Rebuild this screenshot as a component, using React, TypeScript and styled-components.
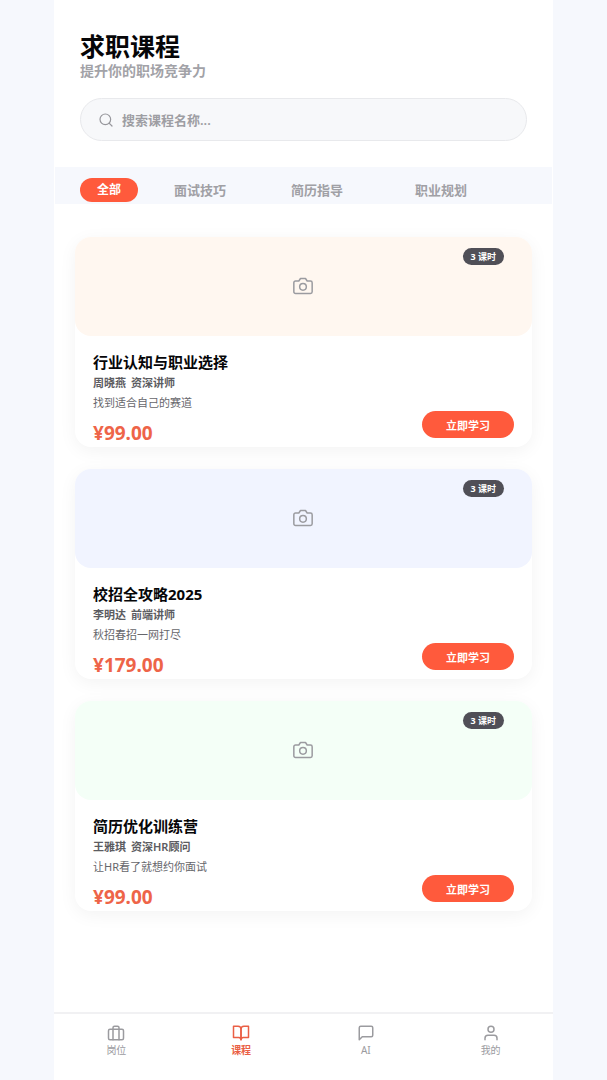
import { useState } from "react";
import type { IconType } from "react-icons";
import {
  FiBookOpen,
  FiBriefcase,
  FiCamera,
  FiMessageSquare,
  FiSearch,
  FiUser,
} from "react-icons/fi";
import styled, { createGlobalStyle } from "styled-components";

const GlobalStyle = createGlobalStyle`
  * {
    box-sizing: border-box;
  }
  body {
    margin: 0;
    background-color: #f6f8fd;
    font-family: "Noto Sans", "Noto Sans CJK SC", sans-serif;
    color: #060608;
  }
  h1, h2, p {
    margin: 0;
  }
  button, input {
    font-family: inherit;
    border: none;
  }
  button {
    padding: 0;
    cursor: pointer;
  }
  a {
    color: inherit;
    text-decoration: none;
  }
`;

const Container = styled.div`
  display: flex;
  flex-direction: column;
  max-width: 499px;
  min-height: 100vh;
  margin: 0 auto;
  background-color: #ffffff;
`;

const Header = styled.header`
  padding: 30px 26px 26px;
`;

const Title = styled.h1`
  font-size: 25px;
  line-height: 32px;
  font-weight: 700;
`;

const Subtitle = styled.p`
  font-size: 14px;
  line-height: 18px;
  font-weight: 600;
  color: #a2a2a7;
`;

const SearchBox = styled.label`
  display: flex;
  align-items: center;
  gap: 8px;
  height: 43px;
  margin-top: 18px;
  padding: 0 17px;
  border: 1px solid #e8e9ec;
  border-radius: 22px;
  background-color: #f7f8fa;
  color: #97979c;
`;

const SearchInput = styled.input`
  flex: 1;
  min-width: 0;
  padding: 0;
  outline: none;
  background: none;
  font-size: 13px;
  font-weight: 600;
  color: #060608;
  &::placeholder {
    color: #9e9ea3;
    opacity: 1;
  }
`;

const Tabs = styled.div`
  display: grid;
  grid-template-columns: 94px 117px 124px auto;
  justify-items: start;
  margin: 0 1px;
  padding: 11px 25px 2px;
  background-color: #f6f8fd;
`;

const Tab = styled.button<{ $active: boolean }>`
  height: 24px;
  padding: ${(props) => (props.$active ? "0 17px" : "0")};
  border-radius: 12px;
  background-color: ${(props) => (props.$active ? "#ff5a3c" : "transparent")};
  font-size: ${(props) => (props.$active ? "12px" : "13px")};
  line-height: 24px;
  font-weight: 600;
  color: ${(props) => (props.$active ? "#ffffff" : "#a0a0a5")};
`;

const CourseList = styled.main`
  display: flex;
  flex-direction: column;
  gap: 22px;
  padding: 33px 21px;
`;

const Card = styled.article`
  border-radius: 16px;
  background-color: #ffffff;
  box-shadow: 0 4px 18px rgba(0, 0, 0, 0.05);
`;

const Cover = styled.div<{ $color: string }>`
  position: relative;
  display: flex;
  align-items: center;
  justify-content: center;
  height: 99px;
  padding: 0 2px 2px 0;
  border-radius: 16px;
  background-color: ${(props) => props.$color};
  color: #9b9ba0;
`;

const Badge = styled.span`
  position: absolute;
  top: 11px;
  right: 28px;
  padding: 0 8px;
  border-radius: 9px;
  background-color: #504f57;
  font-size: 9px;
  line-height: 17px;
  font-weight: 700;
  color: #ffffff;
`;

const CardBody = styled.div`
  padding: 16px 18px 0;
`;

const CourseName = styled.h2`
  font-size: 15px;
  line-height: 20px;
  font-weight: 700;
`;

const Teacher = styled.p`
  display: flex;
  gap: 5px;
  font-size: 11px;
  line-height: 22px;
  font-weight: 600;
  color: #5c5c61;
`;

const Description = styled.p`
  font-size: 11px;
  line-height: 17px;
  color: #66666b;
`;

const Purchase = styled.div`
  display: flex;
  align-items: flex-start;
  justify-content: space-between;
`;

const Price = styled.span`
  padding-top: 8px;
  font-size: 19px;
  line-height: 28px;
  font-weight: 700;
  color: #ee6448;
`;

const LearnButton = styled.button`
  width: 92px;
  height: 27px;
  border-radius: 14px;
  background-color: #ff5a3c;
  font-size: 11px;
  font-weight: 700;
  color: #ffffff;
`;

const NavBar = styled.nav`
  display: grid;
  grid-template-columns: repeat(4, 1fr);
  height: 68px;
  margin-top: auto;
  padding-top: 10px;
  border-top: 2px solid #f1f1f3;
`;

const NavLink = styled.a<{ $active: boolean }>`
  display: flex;
  flex-direction: column;
  align-items: center;
  font-size: 10px;
  line-height: 16px;
  font-weight: ${(props) => (props.$active ? 700 : 400)};
  color: ${(props) => (props.$active ? "#ea5f45" : "#9b9b9f")};
`;

interface ICourse {
  name: string;
  teacher: string;
  role: string;
  description: string;
  price: string;
  lessons: number;
  color: string;
}

const courses: ICourse[] = [
  {
    name: "行业认知与职业选择",
    teacher: "周晓燕",
    role: "资深讲师",
    description: "找到适合自己的赛道",
    price: "99.00",
    lessons: 3,
    color: "#fff7f0",
  },
  {
    name: "校招全攻略2025",
    teacher: "李明达",
    role: "前端讲师",
    description: "秋招春招一网打尽",
    price: "179.00",
    lessons: 3,
    color: "#f1f4ff",
  },
  {
    name: "简历优化训练营",
    teacher: "王雅琪",
    role: "资深HR顾问",
    description: "让HR看了就想约你面试",
    price: "99.00",
    lessons: 3,
    color: "#f4fff7",
  },
];

const categories = ["全部", "面试技巧", "简历指导", "职业规划"];

const navItems: { label: string; path: string; icon: IconType }[] = [
  { label: "岗位", path: "#jobs", icon: FiBriefcase },
  { label: "课程", path: "#courses", icon: FiBookOpen },
  { label: "AI", path: "#ai", icon: FiMessageSquare },
  { label: "我的", path: "#me", icon: FiUser },
];

function CourseCard({ course }: { course: ICourse }) {
  return (
    <Card>
      <Cover $color={course.color}>
        <FiCamera size={20} strokeWidth={1.8} />
        <Badge>{course.lessons} 课时</Badge>
      </Cover>
      <CardBody>
        <CourseName>{course.name}</CourseName>
        <Teacher>
          <span>{course.teacher}</span>
          <span>{course.role}</span>
        </Teacher>
        <Description>{course.description}</Description>
        <Purchase>
          <Price>¥{course.price}</Price>
          <LearnButton type="button">立即学习</LearnButton>
        </Purchase>
      </CardBody>
    </Card>
  );
}

function App() {
  const [category, setCategory] = useState("全部");
  const [keyword, setKeyword] = useState("");
  return (
    <>
      <GlobalStyle />
      <Container>
        <Header>
          <Title>求职课程</Title>
          <Subtitle>提升你的职场竞争力</Subtitle>
          <SearchBox>
            <FiSearch size={16} strokeWidth={1.8} />
            <SearchInput
              type="text"
              aria-label="搜索课程"
              placeholder="搜索课程名称..."
              value={keyword}
              onChange={(e) => setKeyword(e.target.value)}
            />
          </SearchBox>
        </Header>
        <Tabs>
          {categories.map((item) => (
            <Tab
              key={item}
              type="button"
              $active={item === category}
              onClick={() => setCategory(item)}
            >
              {item}
            </Tab>
          ))}
        </Tabs>
        <CourseList>
          {courses.map((course) => (
            <CourseCard key={course.name} course={course} />
          ))}
        </CourseList>
        <NavBar>
          {navItems.map(({ label, path, icon: Icon }) => (
            <NavLink key={path} href={path} $active={path === "#courses"}>
              <Icon size={18} strokeWidth={2} />
              {label}
            </NavLink>
          ))}
        </NavBar>
      </Container>
    </>
  );
}

export default App;
